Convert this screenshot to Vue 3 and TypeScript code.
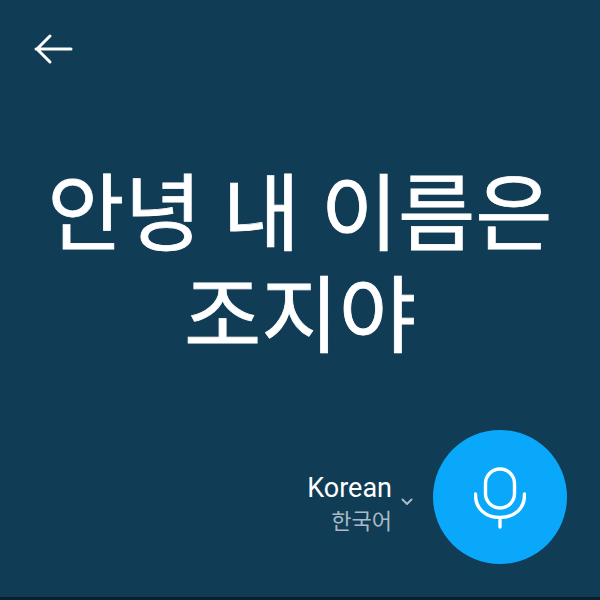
<script setup lang="ts">
const title = '안녕 내 이름은 조지야'
</script>

<template>
  <div class="screen">
    <header class="top">
      <button class="back" aria-label="Back">
        <svg width="40" height="32" viewBox="0 0 40 32" fill="none" stroke="#fff" stroke-width="3" stroke-linecap="round" stroke-linejoin="round">
          <path d="M2 16H37M16 3 3 16 16 29" />
        </svg>
      </button>
    </header>
    <main class="body">
      <h1 class="title">{{ title }}</h1>
    </main>
    <footer class="bottom">
      <div class="lang">
        <div class="names">
          <div class="en">Korean</div>
          <div class="ko">한국어</div>
        </div>
        <svg class="chev" width="12" height="8" viewBox="0 0 12 8" fill="none" stroke="#a9bac6" stroke-width="2" stroke-linecap="round" stroke-linejoin="round">
          <path d="M1.5 1.5 6 6l4.500-4.500" />
        </svg>
      </div>
      <button class="mic" aria-label="Speak">
        <svg width="52" height="64" viewBox="0 0 52 64" fill="none" stroke="#fff" stroke-width="3.400" stroke-linecap="round">
          <rect x="11.500" y="4" width="29" height="39" rx="14.500" />
          <path d="M1.500 29V30C1.500 44 12 52.500 26 52.500S50.500 44 50.500 30V29M26 52.500V62" />
        </svg>
      </button>
    </footer>
    <div class="edge"></div>
  </div>
</template>

<style scoped>
.screen {
  width: 600px;
  height: 600px;
  background: #103c55;
  display: flex;
  flex-direction: column;
  font-family: "Roboto", "Noto Sans CJK KR", sans-serif;
  overflow: hidden;
}
.top {
  height: 100px;
  padding: 33px 0 0 34px;
  box-sizing: border-box;
  flex: none;
}
.back, .mic {
  border: 0;
  padding: 0;
  background: none;
  display: flex;
  align-items: center;
  justify-content: center;
}
.body {
  flex: 1;
  min-height: 0;
}
.title {
  margin: 57px 0 0;
  text-align: center;
  color: #fff;
  font-family: "Noto Sans CJK KR", sans-serif;
  font-weight: 400;
  font-size: 84px;
  line-height: 102px;
  word-spacing: 2px;
  padding: 0 30px;
  -webkit-text-stroke: 0.8px #fff;
}
.bottom {
  flex: none;
  display: flex;
  justify-content: flex-end;
  align-items: center;
  padding: 0 33px 0 0;
  height: 134px;
  margin-bottom: 33px;
}
.lang {
  display: flex;
  align-items: center;
  gap: 9px;
  margin-right: 20px;
}
.names {
  text-align: right;
  margin-top: 16px;
}
.en {
  color: #fff;
  font-size: 27px;
  line-height: 34px;
}
.ko {
  color: #a9bac6;
  font-size: 22px;
  line-height: 34px;
}
.chev {
  margin-top: 10px;
}
.mic {
  width: 134px;
  height: 134px;
  border-radius: 50%;
  background: #0aa8fb;
}
.edge {
  height: 3px;
  flex: none;
  background: #062030;
}
</style>
